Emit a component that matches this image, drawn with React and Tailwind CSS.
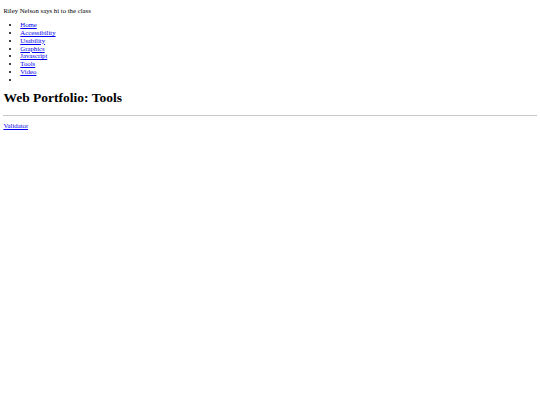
import React from 'react'

const links = ['Home', 'Accessibility', 'Usability', 'Graphics', 'Javascript', 'Tools', 'Video']

const App = () => {
  return (
    <main className="bg-white text-black min-h-[405px] px-[3.4px] py-[6.75px] text-[6.75px] leading-[1.15] font-['Liberation_Serif',serif]">
      <p>Riley Nelson says hi to the class</p>
      <ul className="list-disc pl-[16.9px] my-[6.75px]">
        {links.map((l) => (
          <li key={l}>
            <a href="#" className="text-[#0000ee] underline">{l}</a>
          </li>
        ))}
        <li className="h-[7.76px]"></li>
      </ul>
      <h1 className="text-[13.5px] font-bold leading-[1.15] mt-[7px] mb-[9px]">Web Portfolio: Tools</h1>
      <hr className="mb-[3.4px] border-t border-[#c8c8c8]" />
      <p className="mt-[5.75px]">
        <a href="#" className="text-[#0000ee] underline">Validator</a>
      </p>
    </main>
  )
}

export default App
